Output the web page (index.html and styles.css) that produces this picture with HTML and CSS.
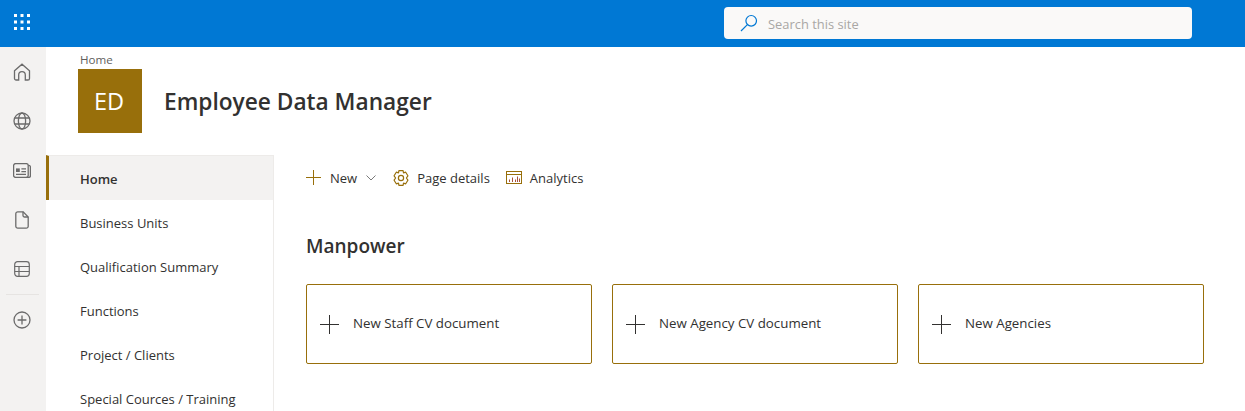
FILE: index.html
```html
<!DOCTYPE html>
<html lang="en">
<head>
<meta charset="utf-8">
<title>Employee Data Manager</title>
<link rel="stylesheet" href="styles.css">
</head>
<body>
<header class="topbar">
  <button class="waffle" aria-label="Apps">
    <svg width="16" height="16" viewBox="0 0 16 16" fill="#fff"><rect x="0" y="0" width="3" height="3"/><rect x="6.5" y="0" width="3" height="3"/><rect x="13" y="0" width="3" height="3"/><rect x="0" y="6.5" width="3" height="3"/><rect x="6.5" y="6.5" width="3" height="3"/><rect x="13" y="6.5" width="3" height="3"/><rect x="0" y="13" width="3" height="3"/><rect x="6.5" y="13" width="3" height="3"/><rect x="13" y="13" width="3" height="3"/></svg>
  </button>
  <div class="search">
    <svg class="search-icon" width="18" height="18" viewBox="0 0 18 18" fill="none" stroke="#0078d4" stroke-width="1.2"><circle cx="11.2" cy="6.8" r="5.3"/><path d="M7.4 10.6 1 17"/></svg>
    <span class="search-text">Search this site</span>
  </div>
</header>
<div class="shell">
  <aside class="rail">
    <svg class="rail-icon" width="18" height="18" viewBox="0 0 18 18" fill="none" stroke="#6b6b6b" stroke-width="1.3"><path d="M1.500 7.800 9 1.200l7.500 6.600v7.600a1.600 1.600 0 0 1-1.600 1.600h-2.600v-5a3.300 3.300 0 0 0-6.600 0v5H3.100a1.600 1.600 0 0 1-1.600-1.600z"/></svg>
    <svg class="rail-icon" width="18" height="18" viewBox="0 0 18 18" fill="none" stroke="#6b6b6b" stroke-width="1.3"><circle cx="9" cy="9" r="8"/><ellipse cx="9" cy="9" rx="3.600" ry="8"/><path d="M1.600 6h14.800M1.600 12h14.800"/></svg>
    <svg class="rail-icon" width="18" height="15" viewBox="0 0 18 15" fill="none" stroke="#6b6b6b" stroke-width="1.3"><rect x="0.600" y="0.600" width="14.600" height="13.800" rx="2"/><path d="M15.200 2.400h.6a1.600 1.600 0 0 1 1.600 1.600v8.800a1.600 1.600 0 0 1-1.600 1.600h-2.400"/><rect x="3" y="5.400" width="3.800" height="3.600" fill="#6b6b6b" stroke="none"/><path d="M8.400 5.800h4.600M8.400 8.600h4.600M3 11.300h10"/></svg>
    <svg class="rail-icon" width="14" height="18" viewBox="0 0 14 18" fill="none" stroke="#6b6b6b" stroke-width="1.3"><path d="M2.800.800h5.400L13.200 6v9.200a2 2 0 0 1-2 2H2.800a2 2 0 0 1-2-2V2.800a2 2 0 0 1 2-2z"/><path d="M8 .800v3.600A1.600 1.600 0 0 0 9.600 6h3.600"/></svg>
    <svg class="rail-icon" width="16" height="16" viewBox="0 0 16 16" fill="none" stroke="#6b6b6b" stroke-width="1.200"><path d="M3.500.700h9a2.800 2.800 0 0 1 2.800 2.800v9a2.800 2.800 0 0 1-2.800 2.800h-9a2.800 2.800 0 0 1-2.800-2.800v-9A2.800 2.800 0 0 1 3.500.700z"/><path d="M.7 5.500h14.600M.7 10.500h14.600M5 5.500v9.800"/></svg>
    <div class="rail-divider"></div>
    <svg class="rail-icon" width="18" height="18" viewBox="0 0 18 18" fill="none" stroke="#6b6b6b" stroke-width="1.300"><circle cx="9" cy="9" r="8"/><path d="M9 4.600v8.800M4.600 9h8.800"/></svg>
  </aside>
  <div class="site">
    <section class="site-head">
      <div class="crumb">Home</div>
      <div class="title-row">
        <div class="logo">ED</div>
        <h1 class="site-title">Employee Data Manager</h1>
      </div>
    </section>
    <div class="body-row">
      <nav class="nav">
        <a class="nav-item active">Home</a>
        <a class="nav-item">Business Units</a>
        <a class="nav-item">Qualification Summary</a>
        <a class="nav-item">Functions</a>
        <a class="nav-item">Project / Clients</a>
        <a class="nav-item">Special Cources / Training</a>
      </nav>
      <main class="content">
        <div class="cmdbar">
          <span class="cmd cmd-new">
            <svg width="15" height="15" viewBox="0 0 15 15" stroke="#986f0b" stroke-width="1" fill="none"><path d="M7.500 0v15M0 7.500h15"/></svg>
            <span class="cmd-label">New</span>
            <svg width="10" height="6" viewBox="0 0 10 6" stroke="#7a7a7a" stroke-width="1" fill="none"><path d="M.5.500 5 5l4.500-4.500"/></svg>
          </span>
          <span class="cmd">
            <svg width="16" height="16" viewBox="0 0 16 16" stroke="#986f0b" stroke-width="1.200" stroke-linejoin="round" fill="none"><path d="M5.900.7h4.200l.4 2.100 2.200-.6 2.200 3.600-1.500 2.200 1.500 2.200-2.200 3.600-2.200-.6-.4 2.100H5.900l-.4-2.100-2.200.6-2.200-3.600L2.600 8 1.100 5.800l2.200-3.600 2.200.6z"/><circle cx="8" cy="8" r="2.600"/></svg>
            <span class="cmd-label">Page details</span>
          </span>
          <span class="cmd">
            <svg width="16" height="13" viewBox="0 0 16 13" stroke="#986f0b" fill="none"><rect x=".5" y=".5" width="15" height="12"/><path d="M.5 3.500h15"/><path d="M3.500 11V8.500M6.500 11V6.500M9.500 11V8.500M11.500 11V5.500M13.500 11V7.500" stroke="#a8513a"/></svg>
            <span class="cmd-label">Analytics</span>
          </span>
        </div>
        <h2 class="section-title">Manpower</h2>
        <div class="cards">
          <a class="card">
            <svg width="19" height="19" viewBox="0 0 19 19" stroke="#323130" stroke-width="1" fill="none"><path d="M9.500 0v19M0 9.500h19"/></svg>
            <span class="card-label">New Staff CV document</span>
          </a>
          <a class="card">
            <svg width="19" height="19" viewBox="0 0 19 19" stroke="#323130" stroke-width="1" fill="none"><path d="M9.500 0v19M0 9.500h19"/></svg>
            <span class="card-label">New Agency CV document</span>
          </a>
          <a class="card">
            <svg width="19" height="19" viewBox="0 0 19 19" stroke="#323130" stroke-width="1" fill="none"><path d="M9.500 0v19M0 9.500h19"/></svg>
            <span class="card-label">New Agencies</span>
          </a>
        </div>
      </main>
    </div>
  </div>
</div>
</body>
</html>
```
FILE: styles.css
```css
* { box-sizing: border-box; }
html, body { margin: 0; height: 411px; overflow: hidden; }
body {
  font-family: "Open Sans", "Noto Sans", "Liberation Sans", sans-serif;
  font-size: 13px;
  color: #323130;
  background: #fff;
}
.topbar {
  height: 47px;
  background: #0078d4;
  display: flex;
  align-items: center;
}
.waffle {
  width: 44px;
  height: 47px;
  padding: 0 0 4px;
  border: 0;
  background: none;
  display: flex;
  align-items: center;
  justify-content: center;
}
.search {
  width: 468px;
  height: 32px;
  margin-left: 680px;
  margin-bottom: 2px;
  background: #faf9f8;
  border-radius: 4px;
  display: flex;
  align-items: center;
  padding-left: 16px;
}
.search-icon { flex: none; }
.search-text { margin-left: 10px; padding-top: 2px; color: #a9a7a5; font-size: 12.900px; }
.shell { display: flex; height: 364px; }
.rail {
  width: 46px;
  flex: none;
  background: #f3f2f1;
  display: flex;
  flex-direction: column;
  align-items: center;
  padding: 16px 2px 0 0;
}
.rail-icon { flex: none; margin-bottom: 31px; }
.rail-icon:nth-child(2) { margin-bottom: 33px; }
.rail-icon:nth-child(3) { margin-bottom: 33px; }
.rail-icon:nth-child(4) { margin-bottom: 32px; }
.rail-icon:nth-child(5) { margin-bottom: 17px; }
.rail-divider {
  width: 33px;
  height: 1px;
  background: #e6e4e2;
  margin-bottom: 16px;
  flex: none;
}
.site { flex: 1; min-width: 0; display: flex; flex-direction: column; }
.site-head { height: 108px; padding: 5px 0 0 32px; flex: none; }
.crumb { font-size: 11.600px; line-height: 15px; height: 17px; margin-left: 2px; color: #605e5c; }
.title-row { display: flex; align-items: center; }
.logo {
  width: 64px;
  height: 64px;
  background: #986f0b;
  color: #fff;
  font-size: 23.500px;
  padding-right: 2px;
  display: flex;
  align-items: center;
  justify-content: center;
}
.site-title { margin: 0 0 0 22px; font-size: 22.700px; font-weight: 600; color: #323130; }
.body-row { display: flex; flex: 1; min-height: 0; }
.nav {
  width: 228px;
  flex: none;
  border-right: 1px solid #edebe9;
  display: flex;
  flex-direction: column;
}
.nav-item {
  height: 44px;
  flex: none;
  display: flex;
  align-items: center;
  padding: 2px 0 0 34px;
  font-size: 13px;
}
.nav-item.active {
  height: 45px;
  padding-left: 31px;
  background: #f3f2f1;
  border-left: 3px solid #986f0b;
  border-top: 1px solid #edebe9;
  font-weight: 600;
}
.content { flex: 1; padding: 0 0 0 32px; min-width: 0; }
.cmdbar { display: flex; align-items: center; height: 45px; }
.cmd { display: flex; align-items: center; gap: 8px; font-size: 13px; margin-right: 16px; }
.cmd-new { gap: 9px; margin-right: 17px; }
.section-title { margin: 33px 0 0; font-size: 19px; line-height: 26px; font-weight: 600; height: 26px; }
.cards { display: flex; gap: 20px; margin-top: 25px; }
.card {
  width: 286px;
  height: 80px;
  border: 1px solid #986f0b;
  border-radius: 2px;
  display: flex;
  align-items: center;
  gap: 14px;
  padding-left: 13px;
  font-size: 13.300px;
}
.card-label { padding-bottom: 2px; }
```
